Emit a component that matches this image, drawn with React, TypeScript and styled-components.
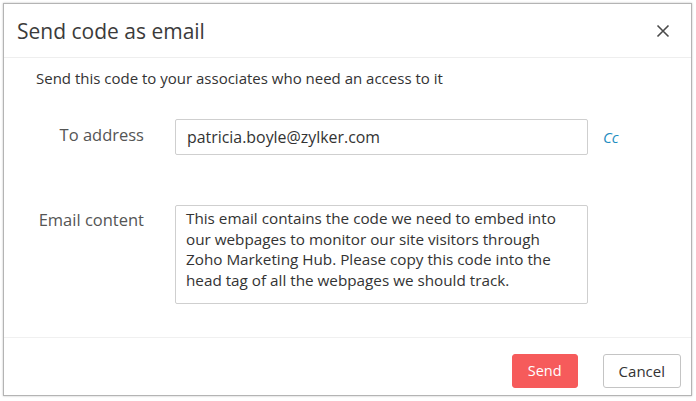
import styled, { createGlobalStyle } from "styled-components";

const GlobalStyle = createGlobalStyle`
  html, body {
    margin: 0;
    padding: 0;
    background: #ffffff;
  }
  body {
    font-family: "Open Sans", "Noto Sans", sans-serif;
    color: #333;
  }
  * {
    box-sizing: border-box;
  }
`;

const Page = styled.div`
  width: 696px;
  height: 401px;
  padding: 3px 4px 5px 3px;
`;

const Dialog = styled.div`
  height: 100%;
  display: flex;
  flex-direction: column;
  background: #fff;
  border: 1px solid #b4b4b4;
  box-shadow: 0 0 2px rgba(0, 0, 0, 0.25);
`;

const Header = styled.header`
  height: 54px;
  display: flex;
  align-items: center;
  justify-content: space-between;
  padding: 0 17px 0 13px;
  border-bottom: 1px solid #eeeeee;
`;

const Title = styled.h1`
  margin: 0;
  font-size: 21px;
  font-weight: 400;
  color: #3b3b3b;
`;

const CloseBtn = styled.button`
  width: 22px;
  height: 22px;
  border: none;
  background: none;
  padding: 0;
  display: flex;
  align-items: center;
  justify-content: center;
  cursor: pointer;
`;

const Body = styled.div`
  flex: 1;
  padding: 10px 32px 0 32px;
  border-bottom: 1px solid #f0f0f0;
`;

const Intro = styled.p`
  margin: 0 0 31px 0;
  font-size: 15px;
  line-height: 20px;
  color: #333;
`;

const Form = styled.div`
  display: grid;
  grid-template-columns: 108px 413px auto;
  column-gap: 31px;
  row-gap: 50px;
  align-items: start;
`;

const Label = styled.label<{ $top: number }>`
  text-align: right;
  font-size: 16.5px;
  color: #555;
  padding-top: ${(p) => p.$top}px;
  line-height: 20px;
  white-space: nowrap;
`;

const TextInput = styled.input`
  width: 100%;
  height: 36px;
  border: 1px solid #cfcfcf;
  border-radius: 2px;
  padding: 0 11px;
  font-family: inherit;
  font-size: 15.9px;
  color: #333;
  outline: none;
`;

const Cc = styled.a`
  margin-left: -16px;
  padding-top: 8px;
  font-size: 15px;
  font-style: italic;
  color: #1f8ec1;
  cursor: pointer;
`;

const Content = styled.textarea`
  width: 100%;
  height: 99px;
  resize: none;
  border: 1px solid #cfcfcf;
  border-radius: 2px;
  padding: 2px 10px;
  font-family: inherit;
  font-size: 15.25px;
  line-height: 20.5px;
  color: #333;
  outline: none;
  overflow: hidden;
`;

const Footer = styled.footer`
  height: 57px;
  display: flex;
  justify-content: flex-end;
  align-items: center;
  gap: 25px;
  padding: 8px 10px 0 0;
`;

const Button = styled.button<{ $primary?: boolean }>`
  height: 34px;
  padding: 0 15px;
  border-radius: 3px;
  font-family: inherit;
  font-size: ${(p) => (p.$primary ? 14.5 : 15)}px;
  cursor: pointer;
  border: 1px solid ${(p) => (p.$primary ? "#f65b5b" : "#c4c4c4")};
  background: ${(p) => (p.$primary ? "#f65b5b" : "#fff")};
  color: ${(p) => (p.$primary ? "#fff" : "#333")};
`;

export default function App() {
  return (
    <Page>
      <GlobalStyle />
      <Dialog>
        <Header>
          <Title>Send code as email</Title>
          <CloseBtn aria-label="Close">
            <svg width="16" height="16" viewBox="0 0 16 16">
              <path d="M2.5 2.5 L13.5 13.5 M13.5 2.5 L2.5 13.5" stroke="#4a4a4a" strokeWidth="1.6" />
            </svg>
          </CloseBtn>
        </Header>
        <Body>
          <Intro>Send this code to your associates who need an access to it</Intro>
          <Form>
            <Label $top={6}>To address</Label>
            <TextInput defaultValue="patricia.boyle@zylker.com" />
            <Cc>Cc</Cc>
            <Label $top={5}>Email content</Label>
            <Content
              defaultValue="This email contains the code we need to embed into our webpages to monitor our site visitors through Zoho Marketing Hub. Please copy this code into the head tag of all the webpages we should track."
            />
            <span />
          </Form>
        </Body>
        <Footer>
          <Button $primary>Send</Button>
          <Button>Cancel</Button>
        </Footer>
      </Dialog>
    </Page>
  );
}
